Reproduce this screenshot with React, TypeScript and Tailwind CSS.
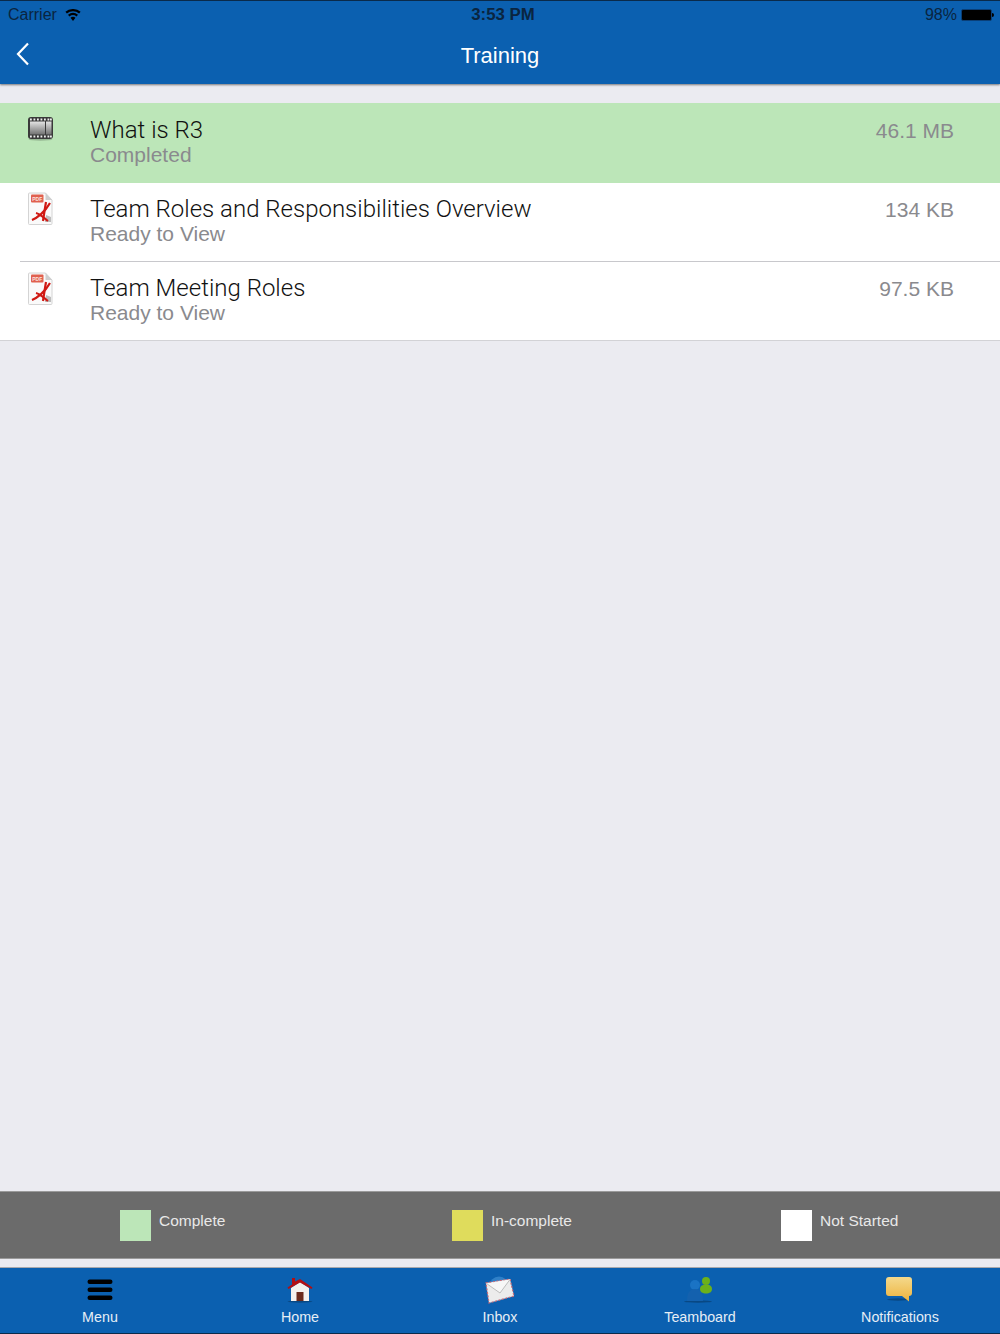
const rows = [
  { title: 'What is R3', status: 'Completed', size: '46.1 MB', icon: 'film', rowClass: 'h-[80px] bg-[#bce6b8]', iconClass: 'pt-[13px]', textClass: 'pt-[13px]' },
  { title: 'Team Roles and Responsibilities Overview', status: 'Ready to View', size: '134 KB', icon: 'pdf', rowClass: 'h-[79px]', iconClass: 'pt-[9px]', textClass: 'pt-[12px]' },
  { title: 'Team Meeting Roles', status: 'Ready to View', size: '97.5 KB', icon: 'pdf', rowClass: 'h-[78px]', iconClass: 'pt-[10px]', textClass: 'pt-[12px]' },
];

function FilmIcon() {
  return (
    <svg width="28" height="26" viewBox="0 0 28 26">
      <defs>
        <linearGradient id="film" x1="0" y1="0" x2="0" y2="1">
          <stop offset="0" stopColor="#e4e4e4" />
          <stop offset="1" stopColor="#727272" />
        </linearGradient>
      </defs>
      <ellipse cx="13.5" cy="23.5" rx="12" ry="1.2" fill="#000" opacity="0.2" />
      <rect x="1" y="1" width="25" height="22" rx="3" fill="#3a3a3a" />
      <rect x="3" y="5.5" width="15" height="13" fill="url(#film)" />
      <rect x="19" y="5.5" width="5.5" height="13" fill="url(#film)" />
      {[3, 6.5, 10, 13.5, 17, 20.5, 23].map((x) => (
        <g key={x} fill="#eee">
          <rect x={x} y="2.5" width="1.8" height="2" />
          <rect x={x} y="19.5" width="1.8" height="2" />
        </g>
      ))}
    </svg>
  );
}

function PdfIcon() {
  return (
    <svg width="28" height="34" viewBox="0 0 28 34">
      <path d="M2.500 1h16l6.500 7v23.500a1 1 0 0 1-1 1H2.500a1 1 0 0 1-1-1V2a1 1 0 0 1 1-1z" fill="#fafafa" stroke="#d4d4d4" />
      <path d="M18.500 1v7h6.500z" fill="#cfcfcf" />
      <rect x="4" y="2.500" width="12.500" height="8" rx="1" fill="#e0604f" />
      <text x="5.200" y="8.700" fontSize="5" fill="#fbe3df" fontFamily="'Liberation Sans', sans-serif" fontWeight="700">PDF</text>
      <path d="M19 23l5 2v5h-6z" fill="#bdbdbd" />
      <path d="M5 28C10 26 18 20 23 11" fill="none" stroke="#d01a14" strokeWidth="2.200" />
      <path d="M9 21C13 22 17 26 21 29" fill="none" stroke="#d01a14" strokeWidth="2" />
      <path d="M16 29C17 22 18 16 19 10" fill="none" stroke="#d01a14" strokeWidth="2.200" />
    </svg>
  );
}

function MenuIcon() {
  return (
    <svg width="28" height="24" viewBox="0 0 28 24" fill="#000">
      <rect x="1.500" y="1.500" width="25" height="4.500" rx="2.200" />
      <rect x="1.500" y="9.500" width="25" height="4.500" rx="2.200" />
      <rect x="1.500" y="17.500" width="25" height="4.500" rx="2.200" />
    </svg>
  );
}

function HomeIcon() {
  return (
    <svg width="28" height="28" viewBox="0 0 28 28">
      <ellipse cx="14" cy="25.500" rx="12.500" ry="1.200" fill="#000" opacity="0.25" />
      <path d="M5 12L14 6l9 6v13H5z" fill="#f4f1ee" />
      <path d="M10.500 16h7v9h-7z" fill="#6b2a1c" />
      <path d="M6 2h3v3.500L14 3l12.500 8.500-1 1.500L14 6.500 2.500 13l-1-1.500L6 8.500z" fill="#b30f14" />
    </svg>
  );
}

function InboxIcon() {
  return (
    <svg width="32" height="30" viewBox="0 0 32 30">
      <circle cx="15" cy="11" r="9.500" fill="#2f80c8" />
      <path d="M2 8L26 4l4 17-25 7z" fill="#ececec" stroke="#c86a78" strokeWidth="1.200" strokeDasharray="2 1.500" />
      <path d="M2.500 8.500L16 18l10-13.500" fill="#f7f7f7" stroke="#bdbdbd" strokeWidth="1" />
    </svg>
  );
}

function TeamIcon() {
  return (
    <svg width="32" height="30" viewBox="0 0 32 30">
      <ellipse cx="14" cy="26.500" rx="14" ry="1.200" fill="#000" opacity="0.25" />
      <circle cx="11" cy="10" r="5" fill="#1a73c4" />
      <path d="M3 26c0-8 2.500-12 8-12s8 4 8 12z" fill="#1461ae" />
      <circle cx="22" cy="6" r="4" fill="#6cb11b" />
      <path d="M16 14c0-3 2-4.500 6-4.500s6 1.500 6 4.500-2.500 4.500-6 4.500-6-1.500-6-4.500z" fill="#6cb11b" />
    </svg>
  );
}

function NoteIcon() {
  return (
    <svg width="30" height="28" viewBox="0 0 30 28">
      <defs>
        <linearGradient id="note" x1="0" y1="0" x2="0" y2="1">
          <stop offset="0" stopColor="#f4d98c" />
          <stop offset="1" stopColor="#eeb33d" />
        </linearGradient>
      </defs>
      <ellipse cx="13" cy="23.500" rx="11" ry="1.200" fill="#000" opacity="0.25" />
      <path d="M4 1h20a3 3 0 0 1 3 3v13a3 3 0 0 1-3 3v5.500L17 20H4a3 3 0 0 1-3-3V4a3 3 0 0 1 3-3z" fill="url(#note)" />
    </svg>
  );
}

const tabs = [
  { label: 'Menu', icon: <MenuIcon /> },
  { label: 'Home', icon: <HomeIcon /> },
  { label: 'Inbox', icon: <InboxIcon /> },
  { label: 'Teamboard', icon: <TeamIcon /> },
  { label: 'Notifications', icon: <NoteIcon /> },
];

const legend = [
  { label: 'Complete', color: 'bg-[#bce6b8]' },
  { label: 'In-complete', color: 'bg-[#dfdc5c]' },
  { label: 'Not Started', color: 'bg-white' },
];

export default function App() {
  return (
    <div className="flex h-[1334px] flex-col bg-[#ebebf1] font-['Liberation_Sans',sans-serif]">
      {/* Status bar and nav */}
      <header className="h-[84px] shrink-0 border-t border-[#0a2a4a] bg-[#0b60b0] shadow-[0_1px_2px_rgba(0,0,0,0.5)]">
        <div className="grid h-[27px] grid-cols-[1fr_auto_1fr] items-center pl-2 pr-1.5 text-[16px] text-[#0a2540]">
          <div className="flex items-center gap-2">
            <span>Carrier</span>
            <svg width="16" height="12" viewBox="0 0 16 12" fill="#000">
              <path d="M8 12L5.500 8.800a4 4 0 0 1 5 0zM4.400 7.500L3 5.800a8 8 0 0 1 10 0l-1.400 1.700a5.800 5.800 0 0 0-7.200 0zM1.900 4.500L.4 2.700a12 12 0 0 1 15.200 0l-1.500 1.800a9.700 9.700 0 0 0-12.200 0z" />
            </svg>
          </div>
          <span className="ml-1 text-[16.800px] font-bold">3:53 PM</span>
          <div className="flex items-center justify-end gap-1">
            <span>98%</span>
            <div className="flex items-center">
              <div className="h-3 w-[31px] rounded-[2px] border border-[#0a3f78] bg-black" />
              <div className="h-1 w-0.5 rounded-r-sm bg-black" />
            </div>
          </div>
        </div>
        <div className="grid h-14 grid-cols-[1fr_auto_1fr] items-center pb-[1px] text-[22px] text-white">
          <svg className="mb-[4px] ml-[16px]" width="14" height="24" viewBox="0 0 14 24" fill="none" stroke="#fff" strokeWidth="2.200">
            <path d="M12 1.500L2 12l10 10.500" />
          </svg>
          <span>Training</span>
        </div>
      </header>

      <main className="mt-[19px] flex-1">
        <div className="border-b border-[#d2d2d6] bg-white">
          {rows.map((row, i) => (
            <div key={row.title} className={row.rowClass}>
              <div className="flex h-[78px]">
                <div className={`w-[90px] shrink-0 pl-[27px] ${row.iconClass}`}>
                  {row.icon === 'film' ? <FilmIcon /> : <PdfIcon />}
                </div>
                <div className={`flex flex-1 pr-[46px] ${row.textClass}`}>
                  <div className="flex-1">
                    <div className="font-['Roboto',sans-serif] text-[24px] leading-7 font-light text-[#111]">{row.title}</div>
                    <div className="-mt-px text-[21px] leading-[23px] text-[#8a8a8e]">{row.status}</div>
                  </div>
                  <div className="pt-[1px] text-[21px] leading-7 text-[#8a8a8e]">{row.size}</div>
                </div>
              </div>
              {i === 1 && <div className="ml-5 h-px bg-[#c8c8cc]" />}
            </div>
          ))}
        </div>
      </main>

      {/* Legend */}
      <div className="grid h-[68px] shrink-0 grid-cols-[332px_329px_1fr] border-y border-[#9a9a9a] bg-[#6b6b6b] pl-[120px] pt-[18px] text-[15.500px] text-[#e8e8e8]">
        {legend.map((item) => (
          <div key={item.label} className="flex items-start gap-2">
            <div className={`h-[31px] w-[31px] ${item.color}`} />
            <span className="leading-[22px]">{item.label}</span>
          </div>
        ))}
      </div>

      {/* Tab bar */}
      <nav className="mt-[8px] grid h-[67px] shrink-0 grid-cols-5 border-t border-b border-t-[#a9a9ad] border-b-[#0a2a4a] bg-[#0b60b0]">
        {tabs.map((tab) => (
          <div key={tab.label} className="flex flex-col items-center text-[14.300px] text-[#e6eef6]">
            <div className="flex h-[37px] items-center justify-center pt-[7px]">{tab.icon}</div>
            <span className="mt-[3px] leading-[18px]">{tab.label}</span>
          </div>
        ))}
      </nav>
    </div>
  );
}
